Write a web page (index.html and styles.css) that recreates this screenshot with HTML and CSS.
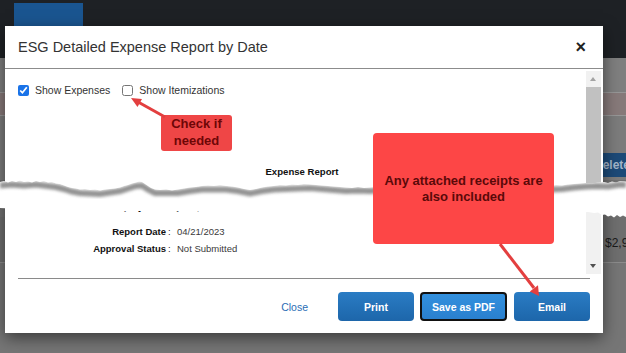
FILE: index.html
```html
<!DOCTYPE html>
<html lang="en">
  <head>
    <meta charset="UTF-8" />
    <meta name="viewport" content="width=device-width, initial-scale=1.0" />
    <title>ESG Detailed Expense Report by Date</title>
    <link rel="stylesheet" href="styles.css">
  </head>
  <body>
    <div class="screen">
      <!-- page behind the dialog -->
      <header class="topbar">
        <span class="tab"></span>
      </header>
      <div class="list">
        <div class="row row-top"></div>
        <div class="row row-pink"></div>
        <div class="row row-action"><span class="btn-delete">Delete</span></div>
        <div class="row row-gap"></div>
        <div class="row row-amount"><span class="amount">$2,931.40</span></div>
      </div>

      <div class="modal">
        <div class="modal-header">
          <span class="modal-title">ESG Detailed Expense Report by Date</span>
          <span class="modal-close">&times;</span>
        </div>

        <div class="modal-body">
          <div class="report">
            <div class="options">
              <label class="option"><input type="checkbox" checked /> Show Expenses</label>
              <label class="option"><input type="checkbox" /> Show Itemizations</label>
            </div>

            <div class="report-title">Expense Report</div>

            <div class="details">
              <div class="detail cut">
                <span class="detail-label">Employee ID</span>
                <span class="detail-colon">:</span>
                <span class="detail-value">jsample - 1042</span>
              </div>
              <div class="detail">
                <span class="detail-label">Report Date</span>
                <span class="detail-colon">:</span>
                <span class="detail-value">04/21/2023</span>
              </div>
              <div class="detail">
                <span class="detail-label">Approval Status</span>
                <span class="detail-colon">:</span>
                <span class="detail-value">Not Submitted</span>
              </div>
            </div>
          </div>

          <div class="scrollbar">
            <span class="scroll-up"></span>
            <span class="scroll-thumb"></span>
            <span class="scroll-down"></span>
          </div>
        </div>

        <div class="divider"></div>

        <div class="modal-footer">
          <a class="link-close">Close</a>
          <button class="btn">Print</button>
          <button class="btn btn-focus">Save as PDF</button>
          <button class="btn">Email</button>
        </div>
      </div>

      <!-- torn paper cut through the middle of the screenshot -->
      <svg class="tear" viewBox="0 170 626 56" width="626" height="56">
        <defs>
          <polygon id="gap" points="0,182 4,181 8,182.5 12,181 16,182 20,180.5 24,182 28,181.5 32,182.5 36,181 40,182 44,181 48,182.5 52,182 56,183.5 60,184 64,185.5 68,187 72,188 76,188.5 80,189.5 85,189 90,190 95,189.5 100,190.5 105,189.5 110,189 115,188.5 120,187.5 124,186 128,185 132,183.5 136,182.5 139,181.5 142,182 145,184 148,186 151,188 155,189.5 160,190 166,189.5 172,190.5 178,189.5 184,188.5 190,187.5 196,187 202,186 208,185.5 214,186 220,185 226,186 232,186.5 238,187.5 244,189 250,190 256,189 262,187.5 268,186.5 274,186 280,185 286,185.5 292,184.5 298,185 304,184 310,184.5 316,185 322,185.5 328,186 334,186.5 340,187 346,187.5 352,188 358,187 364,188 370,187.5 376,187 382,186.5 388,186 394,186.5 400,185.5 406,186 412,185 418,186 424,186.5 430,186 436,187 442,186.5 448,186 454,185.5 460,186 466,185 472,184.5 478,185 484,184 490,184.5 496,185 502,184 508,184.5 514,185 520,184 526,185 532,185.5 538,186 544,185.5 550,186 556,185 562,185.5 568,184.5 574,184 580,183.5 586,183 592,183.5 598,182.5 604,182 608,183 612,181.5 616,182.5 620,181 626,181.5 626,217 623,215.5 620,217 617,215 614,217.5 611,215.5 608,216.5 605,214.5 602,215 598,212.5 594,213 588,212 580,212.5 560,211.5 520,212 480,211 440,212 400,211.5 360,212 320,211.5 280,212 240,211 200,211.5 180,211 160,211.5 140,211 120,211.5 100,211 80,211.5 60,210.5 40,210 20,209.5 10,208.5 0,208" />
          <clipPath id="gap-clip"><use href="#gap" /></clipPath>
          <filter id="soft" x="-5%" y="-50%" width="110%" height="200%"><feGaussianBlur stdDeviation="1.8" /></filter>
        </defs>
        <use href="#gap" fill="#fff" />
        <g clip-path="url(#gap-clip)">
          <polyline transform="translate(0,3.5)" fill="none" stroke="#6e6e6e" stroke-width="6" opacity="0.75" filter="url(#soft)"
            points="0,182 12,181 24,182 36,181 48,182.5 56,183.5 64,185.5 72,188 80,189.5 90,190 100,190.5 110,189 120,187.5 128,185 136,182.5 142,182 148,186 155,189.5 166,189.5 178,189.5 190,187.5 202,186 214,186 226,186 238,187.5 250,190 262,187.5 274,186 286,185.5 298,185 310,184.5 322,185.5 334,186.5 346,187.5 358,187 370,187.5 382,186.5 394,186.5 406,186 418,186 430,186 442,186.5 454,185.5 466,185 478,185 490,184.5 502,184 514,185 526,185 538,186 550,186 562,185.5 574,184 586,183 598,182.5 608,183 620,181 626,181.5" />
        </g>
      </svg>

      <div class="callout callout-small">Check if<br />needed</div>
      <div class="callout callout-big">Any attached receipts are<br />also included</div>

      <svg class="arrows" viewBox="0 0 626 353" width="626" height="353">
        <line x1="165" y1="117" x2="139" y2="102.5" />
        <polygon points="131,98 142,99 137.5,107" />
        <line x1="500" y1="244" x2="534" y2="288" />
        <polygon points="539,296 529.8,291.5 538,285.2" />
      </svg>
    </div>
  </body>
</html>
```

FILE: styles.css
```css
body {
  margin: 0;
}

.screen {
  position: relative;
  width: 626px;
  height: 353px;
  overflow: hidden;
  background: #767676;
  font-family: "Liberation Sans", Arial, sans-serif;
}

/* page behind the dialog */
.topbar {
  height: 58px;
  display: flex;
  padding-left: 14px;
  box-sizing: border-box;
  background: #1e2125;
}

.tab {
  width: 69px;
  margin-top: 3px;
  background: #1a5590;
}

.row {
  display: flex;
  justify-content: flex-end;
  box-sizing: border-box;
}

.row-top {
  height: 34px;
  background: #7f7f7f;
}

.row-pink {
  height: 24px;
  background: #877a7a;
  border-top: 1px solid #979797;
  border-bottom: 1px solid #979797;
}

.row-action {
  height: 64px;
  padding-top: 37px;
  align-items: flex-start;
  background: #7c7c7c;
}

.btn-delete {
  width: 60px;
  height: 24px;
  margin-right: -16px;
  flex-shrink: 0;
  display: flex;
  align-items: center;
  justify-content: center;
  background: #1c4a78;
  color: #a3b5c9;
  font-size: 12px;
  font-weight: bold;
}

.row-gap {
  height: 37px;
  background: #727272;
}

.row-amount {
  height: 46px;
  padding-top: 6px;
  align-items: center;
  background: #6f6f6f;
  border-bottom: 1px solid #8c8c8c;
}

.amount {
  width: 70px;
  margin-right: -49px;
  flex-shrink: 0;
  color: #1a1a1a;
  font-size: 12px;
}

/* dialog */
.modal {
  position: absolute;
  left: 5px;
  top: 26px;
  width: 598px;
  height: 307px;
  display: flex;
  flex-direction: column;
  background: #fff;
  box-shadow: 0 5px 15px rgba(0, 0, 0, 0.5);
}

.modal-header {
  height: 43px;
  flex-shrink: 0;
  display: flex;
  align-items: center;
  justify-content: space-between;
  padding: 0 17px 0 13px;
  box-sizing: border-box;
  border-bottom: 1px solid #8c8c8c;
}

.modal-title {
  color: #333;
  font-size: 14.5px;
}

.modal-close {
  color: #222;
  font-size: 18px;
  font-weight: bold;
  line-height: 1;
}

.modal-body {
  height: 206px;
  flex-shrink: 0;
  display: flex;
}

.report {
  flex: 1;
  padding: 14px 0 0 13px;
}

.options {
  height: 14px;
  display: flex;
  align-items: center;
  gap: 12px;
}

.option {
  display: flex;
  align-items: center;
  gap: 6px;
  color: #333;
  font-size: 10.5px;
}

.option input {
  width: 11px;
  height: 11px;
  margin: 0;
  accent-color: #1a73e8;
}

.report-title {
  margin-top: 69px;
  line-height: 12px;
  text-align: center;
  color: #111;
  font-size: 9.6px;
  font-weight: bold;
}

.details {
  margin-top: 20px;
}

.detail {
  display: grid;
  grid-template-columns: 148px 11px 1fr;
  line-height: 17px;
  font-size: 9.5px;
}

.detail.cut {
  margin-bottom: 8px;
}

.detail-label {
  text-align: right;
  color: #111;
  font-weight: bold;
}

.detail-colon {
  padding-left: 2px;
  color: #222;
}

.detail-value {
  color: #3a3a3a;
}

.scrollbar {
  width: 15px;
  margin: 2px 2px 1px 0;
  display: flex;
  flex-direction: column;
  align-items: center;
  background: #f1f1f1;
}

.scroll-up,
.scroll-down {
  height: 16px;
  width: 15px;
  position: relative;
}

.scroll-up::after,
.scroll-down::after {
  content: "";
  position: absolute;
  left: 4px;
  border-left: 3.5px solid transparent;
  border-right: 3.5px solid transparent;
}

.scroll-up::after {
  top: 6px;
  border-bottom: 4px solid #a3a3a3;
}

.scroll-down::after {
  top: 6px;
  border-top: 4px solid #505050;
}

.scroll-thumb {
  width: 15px;
  height: 118px;
  background: #c1c1c1;
}

.scroll-down {
  margin-top: auto;
}

.divider {
  margin: 3px 13px 0;
  border-top: 1px solid #8a8a8a;
}

.modal-footer {
  display: flex;
  justify-content: flex-end;
  align-items: center;
  gap: 6px;
  padding: 13px 13px 12px 0;
}

.link-close {
  margin-right: 24px;
  color: #2a6db5;
  font-size: 10.5px;
}

.btn {
  width: 76px;
  height: 29px;
  border: none;
  border-radius: 4px;
  background: linear-gradient(#2a7cc4, #1d66aa);
  color: #fff;
  font-family: "Liberation Sans", Arial, sans-serif;
  font-size: 10.5px;
  font-weight: bold;
}

.btn-focus {
  width: 87px;
  margin-right: 1px;
  border: 2px solid #111;
  background: linear-gradient(#3290de, #2a80cf);
}

/* torn paper strip */
.tear {
  position: absolute;
  left: 0;
  top: 170px;
}

/* annotations */
.callout {
  position: absolute;
  box-sizing: border-box;
  text-align: center;
  font-size: 13px;
  font-weight: bold;
}

.callout-small {
  left: 161px;
  top: 115px;
  width: 71px;
  height: 36px;
  line-height: 17px;
  border-radius: 3px;
  background: #ef4646;
  color: #6e0606;
}

.callout-big {
  left: 373px;
  top: 133px;
  width: 181px;
  height: 111px;
  padding-top: 40px;
  line-height: 16px;
  border-radius: 4px;
  background: #fd4646;
  color: #5a0909;
}

.arrows {
  position: absolute;
  left: 0;
  top: 0;
  pointer-events: none;
}

.arrows line {
  stroke: #e33f3f;
  stroke-width: 3;
}

.arrows polygon {
  fill: #e33f3f;
}
```
